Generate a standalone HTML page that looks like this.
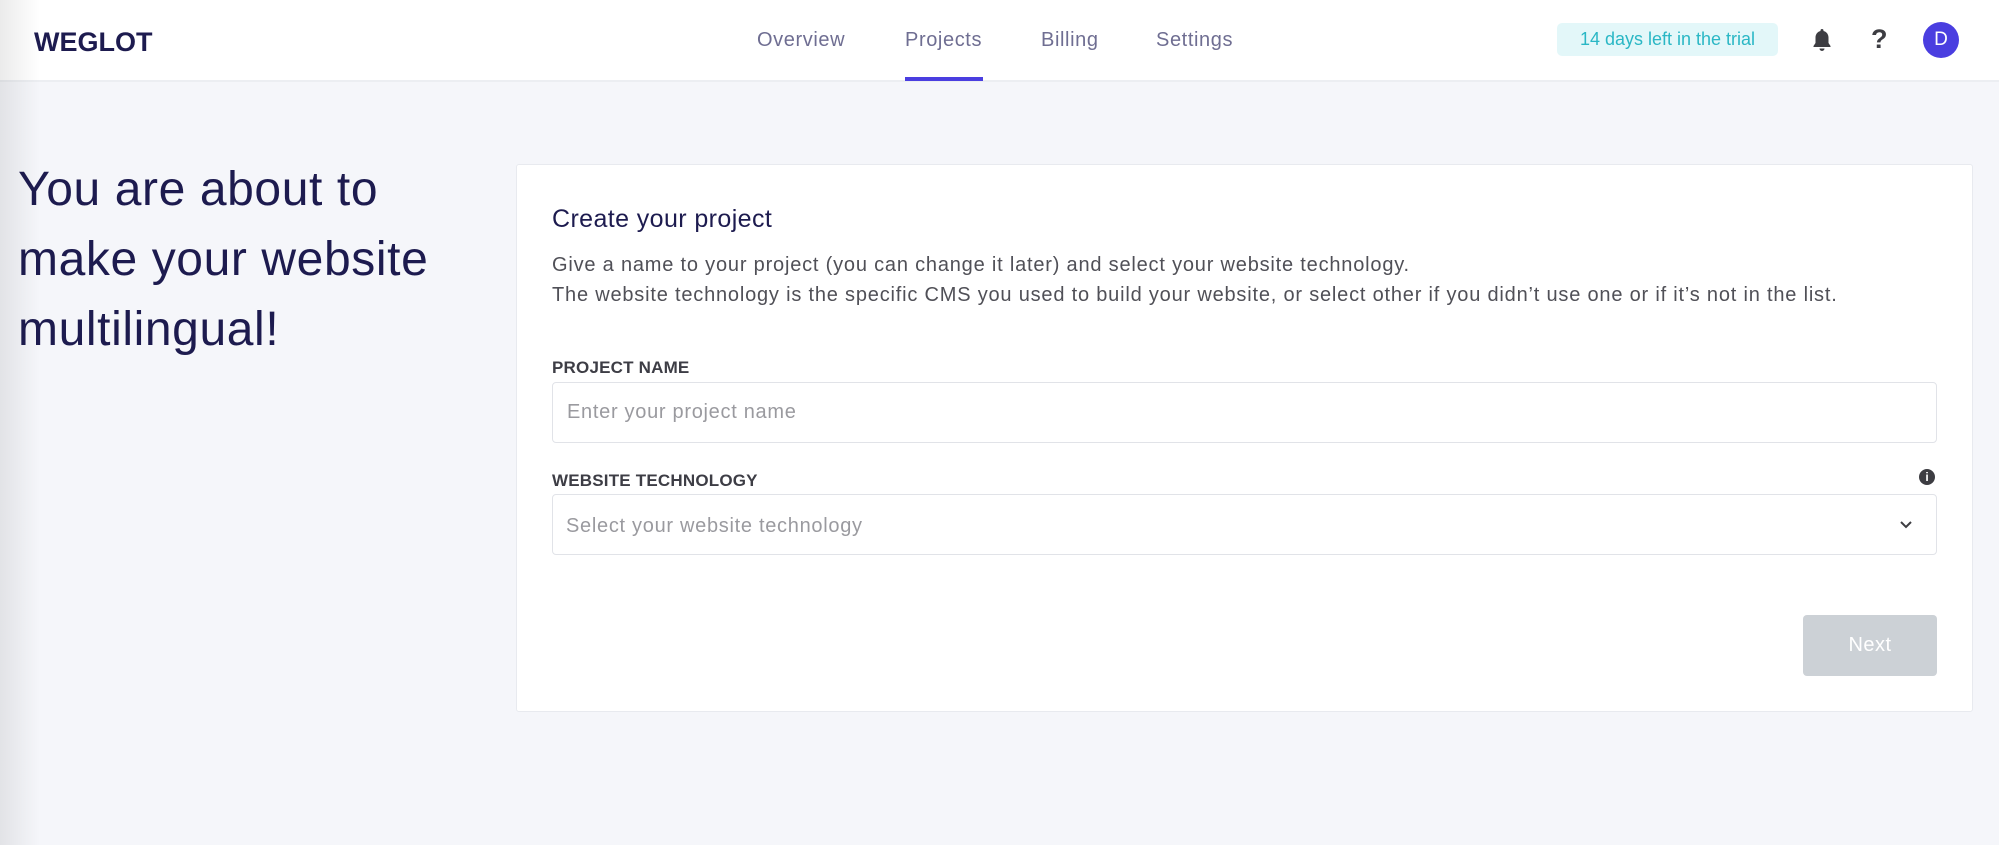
<!DOCTYPE html>
<html><head><meta charset="utf-8"><style>
*{margin:0;padding:0;box-sizing:border-box}
body{width:1999px;height:845px;overflow:hidden;background:#f5f6fa;font-family:"Liberation Sans",sans-serif;position:relative}
.abs{position:absolute;white-space:nowrap}
#hdr{position:absolute;left:0;top:0;width:1999px;height:82px;background:#fff;border-bottom:2px solid #eceef2}
#shade{position:absolute;left:0;top:0;width:40px;height:845px;background:linear-gradient(90deg,rgba(0,0,0,0.08),rgba(0,0,0,0));z-index:5}
.nav{font-size:20px;color:#6f6e92;top:29px;letter-spacing:0.6px}
.card{position:absolute;left:516px;top:164px;width:1457px;height:548px;background:#fff;border:1px solid #e8eaef;border-radius:3px}
.inp{position:absolute;left:552px;width:1385px;height:61px;border:1.5px solid #e1e3e8;border-radius:4px;background:#fff}
.lbl{font-size:17px;font-weight:bold;color:#3d3d45;letter-spacing:0.2px}
.ph{font-size:20px;color:#9a9a9f;letter-spacing:0.7px}
</style></head><body>
<div id="shade"></div>
<div id="hdr"></div>
<div class="abs" style="left:34px;top:27px;font-size:27px;font-weight:bold;color:#1d1b4f;letter-spacing:0px">WEGLOT</div>
<div class="abs nav" style="left:757px">Overview</div>
<div class="abs nav" style="left:905px">Projects</div>
<div class="abs nav" style="left:1041px">Billing</div>
<div class="abs nav" style="left:1156px">Settings</div>
<div class="abs" style="left:905px;top:77px;width:78px;height:4px;background:#4a3ee0"></div>
<div class="abs" style="left:1557px;top:23px;width:221px;height:33px;background:#e3f7f9;border-radius:5px;color:#2ab7c5;font-size:18px;text-align:center;line-height:33px">14 days left in the trial</div>
<svg class="abs" style="left:1810px;top:27px" width="24" height="26" viewBox="0 0 24 26"><path d="M12 2c-.9 0-1.5.6-1.5 1.4v.6C7.3 4.8 5.5 7.5 5.5 10.5v5.5L3.5 19v1h17v-1l-2-3v-5.5c0-3-1.8-5.7-5-6.5v-.6C13.5 2.6 12.9 2 12 2z M9.5 21.5a2.5 2.5 0 0 0 5 0z" fill="#3d3d42"/></svg>
<div class="abs" style="left:1871px;top:24px;font-size:27px;font-weight:bold;color:#3d3d42">?</div>
<div class="abs" style="left:1923px;top:22px;width:36px;height:36px;border-radius:50%;background:#4a3ee0;color:#fff;font-size:19px;text-align:center;line-height:36px">D</div>
<div class="abs" style="left:18px;top:155px;font-size:48px;line-height:70px;color:#1d1b4f;white-space:normal;width:500px;letter-spacing:0.6px">You are about to<br>make your website<br>multilingual!</div>
<div class="card"></div>
<div class="abs" style="left:552px;top:205px;font-size:25px;color:#1d1b4f;letter-spacing:0.4px">Create your project</div>
<div class="abs" style="left:552px;top:250px;font-size:20px;line-height:30px;color:#505057;letter-spacing:0.8px">Give a name to your project (you can change it later) and select your website technology.<br>The website technology is the specific CMS you used to build your website, or select other if you didn’t use one or if it’s not in the list.</div>
<div class="abs lbl" style="left:552px;top:358px">PROJECT NAME</div>
<div class="inp" style="top:382px"></div>
<div class="abs ph" style="left:567px;top:401px">Enter your project name</div>
<div class="abs lbl" style="left:552px;top:471px">WEBSITE TECHNOLOGY</div>
<div class="abs" style="left:1919px;top:469px;width:16px;height:16px;border-radius:50%;background:#3d3d42;color:#fff;font-size:12px;font-weight:bold;text-align:center;line-height:16px">i</div>
<div class="inp" style="top:494px"></div>
<div class="abs ph" style="left:566px;top:515px">Select your website technology</div>
<svg class="abs" style="left:1899px;top:520px" width="14" height="10" viewBox="0 0 14 10"><path d="M2 2l5 5 5-5" stroke="#3d3d42" stroke-width="2" fill="none"/></svg>
<div class="abs" style="left:1803px;top:615px;width:134px;height:61px;background:#ccd1d6;border-radius:4px;color:#fff;font-size:20px;text-align:center;line-height:61px;letter-spacing:0.5px">Next</div>
</body></html>
